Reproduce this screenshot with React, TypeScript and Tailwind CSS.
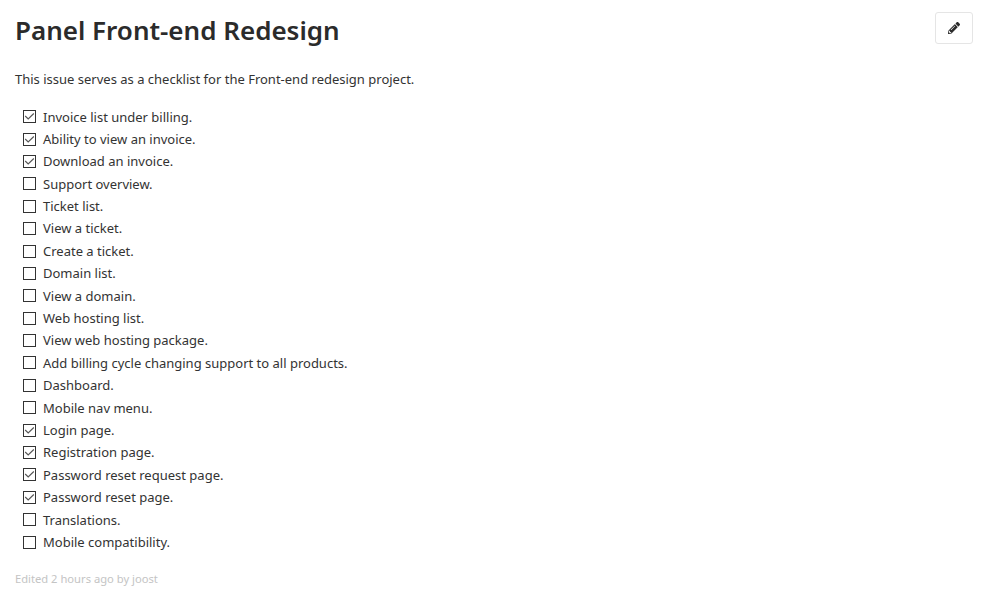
import { FaPencilAlt } from 'react-icons/fa'

const tasks: [string, boolean][] = [
  ['Invoice list under billing.', true],
  ['Ability to view an invoice.', true],
  ['Download an invoice.', true],
  ['Support overview.', false],
  ['Ticket list.', false],
  ['View a ticket.', false],
  ['Create a ticket.', false],
  ['Domain list.', false],
  ['View a domain.', false],
  ['Web hosting list.', false],
  ['View web hosting package.', false],
  ['Add billing cycle changing support to all products.', false],
  ['Dashboard.', false],
  ['Mobile nav menu.', false],
  ['Login page.', true],
  ['Registration page.', true],
  ['Password reset request page.', true],
  ['Password reset page.', true],
  ['Translations.', false],
  ['Mobile compatibility.', false],
]

const Checkbox = ({ checked }: { checked: boolean }) => (
  <span className="w-[13px] h-[13px] border border-[#333333] bg-white flex items-center justify-center shrink-0">
    {checked && (
      <svg width="11" height="11" viewBox="0 0 11 11" fill="none">
        <path d="M1.2 5L4.2 8L9.8 2.5" stroke="#555555" strokeWidth="1.1" />
      </svg>
    )}
  </span>
)

const App = () => {
  return (
    <div className="min-h-[596px] bg-white px-[15px] text-[13px] leading-[22.4px] text-[#333333] font-['Noto_Sans','Open_Sans',sans-serif]">
      <div className="flex justify-between items-start pt-[10px]">
        <h1 className="text-[26px] leading-[40px] font-semibold text-[#2b2b2b]">Panel Front-end Redesign</h1>
        <button className="w-[38px] h-[32px] mt-[2px] mr-[12px] border border-[#e5e5e5] rounded-[3px] flex items-center justify-center text-[#2b2b2b]">
          <FaPencilAlt size={12} />
        </button>
      </div>
      <p className="mt-[18px]">This issue serves as a checklist for the Front-end redesign project.</p>
      <ul className="mt-[15.1px] pl-[8px]">
        {tasks.map(([label, done]) => (
          <li key={label} className="flex items-center gap-[7px] h-[22.4px]">
            <Checkbox checked={done} />
            <span>{label}</span>
          </li>
        ))}
      </ul>
      <p className="mt-[17px] text-[11.2px] leading-[18px] text-[#c4c4c4]">Edited 2 hours ago by joost</p>
    </div>
  )
}

export default App
